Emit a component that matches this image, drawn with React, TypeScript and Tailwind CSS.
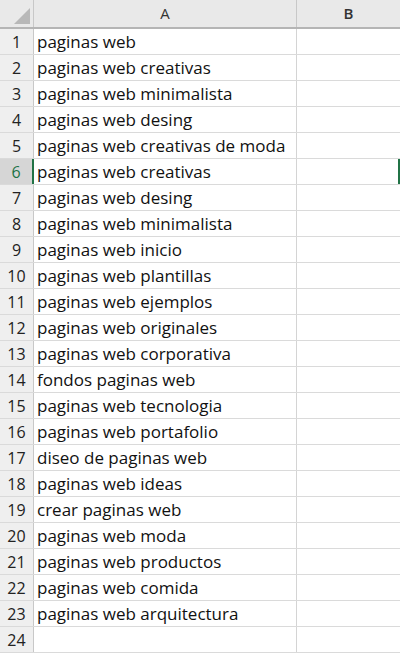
const rows = [
  "paginas web",
  "paginas web creativas",
  "paginas web minimalista",
  "paginas web desing",
  "paginas web creativas de moda",
  "paginas web creativas",
  "paginas web desing",
  "paginas web minimalista",
  "paginas web inicio",
  "paginas web plantillas",
  "paginas web ejemplos",
  "paginas web originales",
  "paginas web corporativa",
  "fondos paginas web",
  "paginas web tecnologia",
  "paginas web portafolio",
  "diseo de paginas web",
  "paginas web ideas",
  "crear paginas web",
  "paginas web moda",
  "paginas web productos",
  "paginas web comida",
  "paginas web arquitectura",
  "",
];

export default function App() {
  return (
    <div
      className="w-[400px] h-[655px] overflow-hidden bg-white text-[#222]"
      style={{ fontFamily: '"Open Sans", "Noto Sans", sans-serif' }}
    >
      {/* column headers */}
      <div className="flex h-[29px] bg-[#e9e9e9] border-b-2 border-[#b5b5b5]">
        <div className="w-[34px] shrink-0 border-r border-[#c8c8c8] relative">
          <svg className="absolute right-[3px] bottom-[3px]" width="16" height="16" viewBox="0 0 16 16">
            <polygon points="16,0 16,16 0,16" fill="#b8b8b8" />
          </svg>
        </div>
        <div className="w-[263px] shrink-0 border-r border-[#c8c8c8] flex items-center justify-center text-[15px] text-[#333]">
          A
        </div>
        <div className="flex-1 flex items-center justify-center text-[15px] font-semibold text-[#333]">
          B
        </div>
      </div>

      {rows.map((text, i) => {
        const selected = i === 5;
        return (
          <div key={i} className="flex h-[26px] border-b border-[#dadada]">
            <div
              className={
                selected
                  ? "w-[34px] shrink-0 bg-[#d6d6d6] border-r-2 border-[#217346] flex items-center justify-center text-[16px] text-[#217346]"
                  : "w-[34px] shrink-0 bg-[#efefef] border-r border-[#c8c8c8] flex items-center justify-center text-[16px] text-[#222]"
              }
            >
              {i + 1}
            </div>
            <div className="w-[263px] shrink-0 border-r border-[#d4d4d4] flex items-center pl-[3px] text-[17px] whitespace-nowrap text-[#111]">
              {text}
            </div>
            <div className={selected ? "flex-1 border-r-2 border-[#217346]" : "flex-1"} />
          </div>
        );
      })}
    </div>
  );
}
